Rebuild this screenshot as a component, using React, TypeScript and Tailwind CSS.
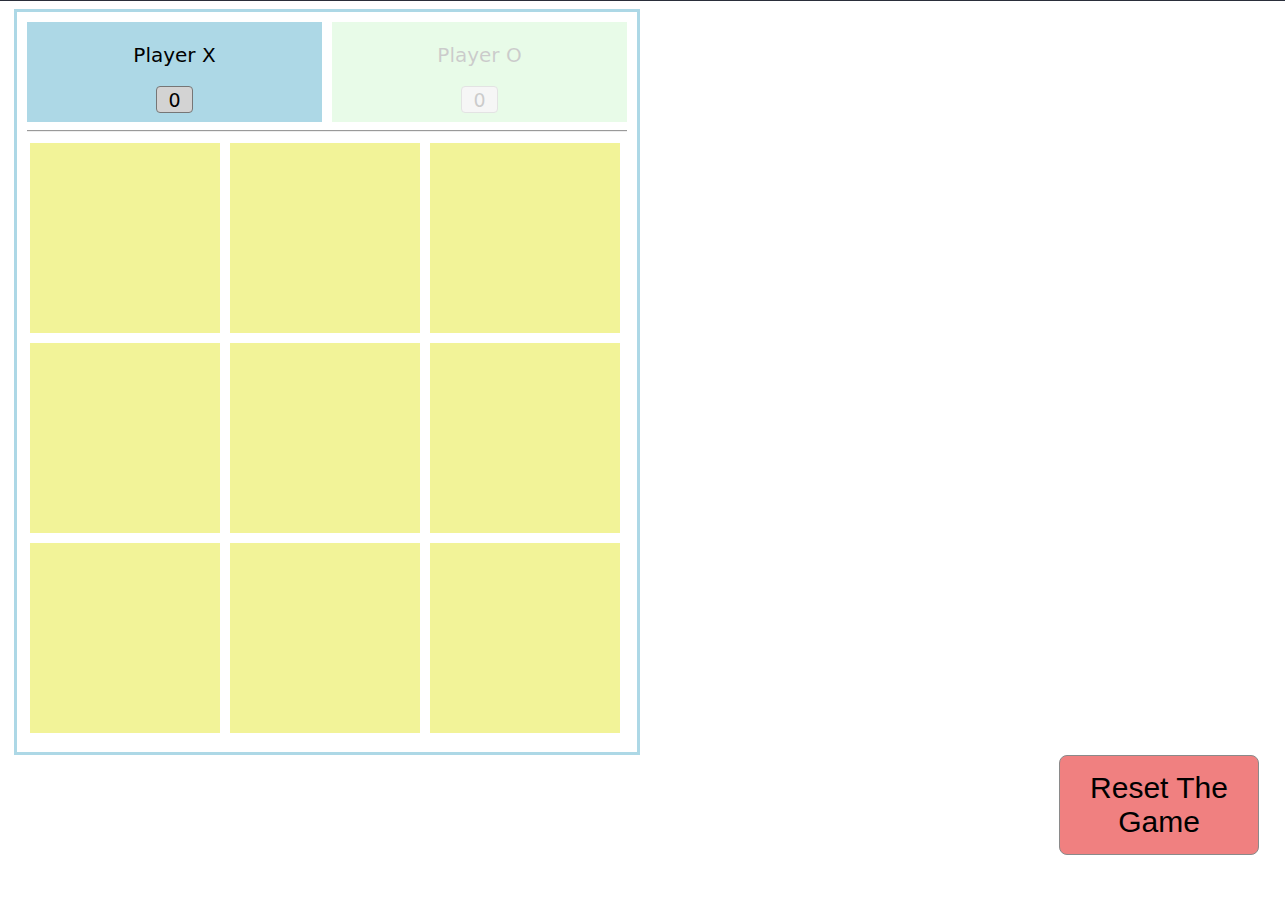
const cells = Array.from({ length: 9 });

const PlayerCard = ({ name, active }: { name: string; active: boolean }) => {
  return (
    <div
      className={
        active
          ? 'flex h-[100px] w-[295px] flex-col items-center bg-[#add8e6]'
          : 'flex h-[100px] w-[295px] flex-col items-center bg-[#90ee90] opacity-20'
      }
    >
      <h2 className="mt-[21px] text-[20px] leading-[24px] text-black">{name}</h2>
      <button className="mt-[19px] h-[27px] w-[37px] rounded-[4px] border border-[#767676] bg-[#d3d3d3] text-[19px] leading-[24px] text-black">
        0
      </button>
    </div>
  );
};

const App = () => {
  return (
    <div className="min-h-[919px] border-t border-[#2a2e3a] bg-white font-['DejaVu_Sans',sans-serif]">
      <div className="ml-[14px] mt-[8px] w-[626px] border-[3px] border-[#add8e6] px-[10px] pb-[19px] pt-[10px]">
        <div className="flex gap-[10px]">
          <PlayerCard name="Player X" active />
          <PlayerCard name="Player O" active={false} />
        </div>
        <hr className="mt-[8px] border-t border-b border-t-[#9a9a9a] border-b-[#eeeeee]" />
        <div className="ml-[3px] mt-[11px] grid w-[590px] grid-cols-3 gap-[10px]">
          {cells.map((_, i) => (
            <div key={i} className="h-[190px] w-[190px] bg-[#f2f398]" />
          ))}
        </div>
      </div>
      <div className="flex justify-end pr-[26px]">
        <button className="h-[100px] w-[200px] rounded-[8px] border border-[#8a8a8a] bg-[#f08080] px-4 font-['Liberation_Sans',sans-serif] text-[30px] leading-[34px] text-black">
          Reset The Game
        </button>
      </div>
    </div>
  );
};

export default App;
